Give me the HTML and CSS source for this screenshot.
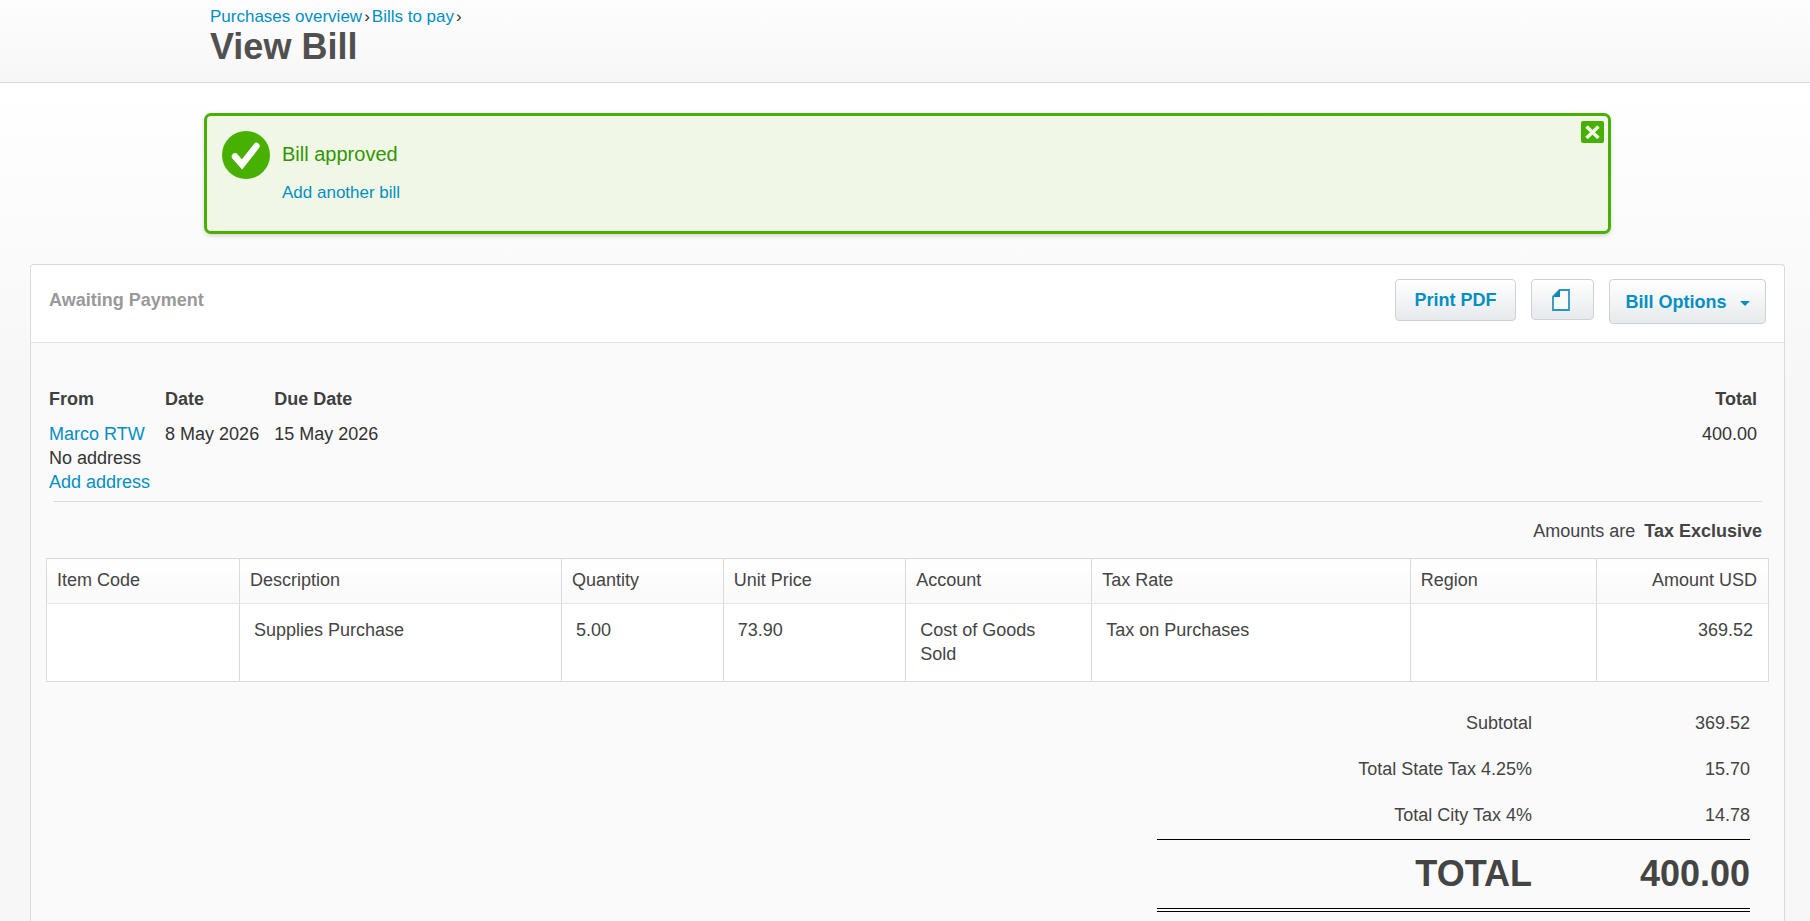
FILE: index.html
```html
<!DOCTYPE html>
<html lang="en">
<head>
<meta charset="utf-8">
<title>View Bill</title>
<link rel="stylesheet" href="styles.css">
</head>
<body>
<header class="page-header">
  <div class="container">
    <nav class="breadcrumbs" aria-label="Breadcrumb"><a href="#">Purchases overview</a><span>›</span><a href="#">Bills to pay</a><span>›</span></nav>
    <h1 class="page-title">View Bill</h1>
  </div>
</header>
<main class="page">
  <section class="alert" role="status">
    <svg class="alert-icon" viewBox="0 0 48 48" aria-hidden="true"><circle cx="24" cy="24" r="24" fill="#48b000"/><path d="M13 25.500l7 8L34.500 15" fill="none" stroke="#fff" stroke-width="6.500" stroke-linecap="round" stroke-linejoin="miter"/></svg>
    <div class="alert-text">
      <p class="alert-title">Bill approved</p>
      <a class="alert-link" href="#">Add another bill</a>
    </div>
    <button class="alert-close" type="button" aria-label="Close">
      <svg viewBox="0 0 23 22" aria-hidden="true"><path d="M5.500 5.500l12 11.500M17.500 5.500l-12 11.500" fill="none" stroke="#f0f7e6" stroke-width="3.500"/></svg>
    </button>
  </section>

  <section class="panel">
    <div class="panel-head">
      <h2 class="status">Awaiting Payment</h2>
      <div class="actions">
        <button class="btn btn-print" type="button">Print PDF</button>
        <button class="btn btn-file" type="button" aria-label="Files">
          <svg viewBox="0 0 18 22" aria-hidden="true"><path d="M7.500 1H17v20H1V7.500z" fill="#f7f9fa" stroke="#2b96c0" stroke-width="1.800"/><path d="M1 8l7-7v7z" fill="#0d85b5"/></svg>
        </button>
        <button class="btn btn-options" type="button">Bill Options <span class="caret"></span></button>
      </div>
    </div>

    <div class="bill">
      <div class="summary">
        <dl class="field">
          <dt>From</dt>
          <dd><a href="#">Marco RTW</a><br>No address<br><a href="#">Add address</a></dd>
        </dl>
        <dl class="field"><dt>Date</dt><dd>8 May 2026</dd></dl>
        <dl class="field"><dt>Due Date</dt><dd>15 May 2026</dd></dl>
        <dl class="field field-total"><dt>Total</dt><dd>400.00</dd></dl>
      </div>
      <p class="tax-mode">Amounts are <strong>Tax Exclusive</strong></p>

      <table class="lines">
        <colgroup><col class="c-item"><col class="c-desc"><col class="c-qty"><col class="c-price"><col class="c-account"><col class="c-tax"><col class="c-region"><col class="c-amount"></colgroup>
        <thead>
          <tr><th>Item Code</th><th>Description</th><th>Quantity</th><th>Unit Price</th><th>Account</th><th>Tax Rate</th><th>Region</th><th class="num">Amount USD</th></tr>
        </thead>
        <tbody>
          <tr><td></td><td>Supplies Purchase</td><td>5.00</td><td>73.90</td><td>Cost of Goods Sold</td><td>Tax on Purchases</td><td></td><td class="num">369.52</td></tr>
        </tbody>
      </table>

      <dl class="totals">
        <div class="total-row"><dt>Subtotal</dt><dd>369.52</dd></div>
        <div class="total-row"><dt>Total State Tax 4.25%</dt><dd>15.70</dd></div>
        <div class="total-row"><dt>Total City Tax 4%</dt><dd>14.78</dd></div>
        <div class="total-row grand"><dt>TOTAL</dt><dd>400.00</dd></div>
      </dl>
    </div>
  </section>
</main>
</body>
</html>
```
FILE: styles.css
```css
* { box-sizing: border-box; }

body {
  margin: 0;
  min-height: 100vh;
  display: flex;
  flex-direction: column;
  background: #f7f7f7;
  color: #333;
  font: 18px/24px "Liberation Sans", Arial, sans-serif;
}

h1, h2, p, dl, dd { margin: 0; }

a { color: #048fc2; text-decoration: none; }

button { font: inherit; cursor: pointer; }

.page-header {
  padding: 7px 25px 15px 30px;
  border-bottom: 1px solid #d9dadb;
  background: linear-gradient(#fdfdfd, #f7f7f7);
}

.container {
  max-width: 1407px;
  margin: 0 auto;
  padding: 0 6px;
}

.breadcrumbs {
  display: flex;
  gap: 2px;
  font-size: 17px;
  line-height: 20px;
}

.page-title {
  color: #505050;
  font-size: 36px;
  line-height: 40px;
}

.page {
  flex: 1;
  display: flex;
  flex-direction: column;
  padding: 30px 25px 0 30px;
  background: linear-gradient(#fff, #f7f7f7 300px);
}

.alert {
  position: relative;
  display: flex;
  gap: 12px;
  width: 100%;
  max-width: 1407px;
  min-height: 121px;
  margin: 0 auto 30px;
  padding: 15px;
  border: 3px solid #48b000;
  border-radius: 7px;
  background: #f0f7e6;
  box-shadow: 0 2px 4px rgba(0, 0, 0, .15);
}

.alert-icon { width: 48px; height: 48px; }

.alert-text { padding-top: 11px; }

.alert-title {
  margin-bottom: 14px;
  color: #329600;
  font-size: 20px;
}

.alert-link { font-size: 17px; }

.alert-close {
  position: absolute;
  top: 5px;
  right: 4px;
  width: 23px;
  height: 22px;
  padding: 0;
  border: 0;
  border-radius: 2px;
  background: #48b000;
}

.alert-close svg { display: block; }

.panel {
  flex: 1;
  display: flex;
  flex-direction: column;
  border: 1px solid #d9dadb;
  border-bottom: 0;
  border-radius: 4px 4px 0 0;
  background: #fafafa;
}

.panel-head {
  display: flex;
  justify-content: space-between;
  align-items: flex-start;
  min-height: 78px;
  padding: 14px 18px;
  border-bottom: 1px solid #e3e4e5;
  border-radius: 4px 4px 0 0;
  background: #fff;
}

.status {
  padding-top: 9px;
  color: #999;
  font-size: 18px;
}

.actions {
  display: flex;
  align-items: flex-start;
  gap: 15px;
}

.btn {
  display: flex;
  align-items: center;
  justify-content: center;
  padding: 0;
  border: 1px solid #cdd2d5;
  border-radius: 4px;
  background: linear-gradient(#fff, #e6eaec);
  color: #048fc2;
  font-weight: bold;
  white-space: nowrap;
}

.btn-print { width: 121px; height: 42px; }
.btn-file { width: 63px; height: 41px; padding-right: 3px; }
.btn-file svg { width: 18px; height: 22px; }
.btn-options { width: 157px; height: 45px; gap: 13px; }

.caret {
  margin-top: 3px;
  border: 5px solid transparent;
  border-top-color: #048fc2;
  border-bottom: 0;
}

.bill { padding: 44px 15px 0; }

.summary {
  display: flex;
  gap: 15px;
  margin: 0 3px;
  padding-bottom: 7px;
}

.field dt {
  margin-bottom: 11px;
  color: #404040;
  font-weight: bold;
}

.field-total {
  margin-left: auto;
  padding-right: 9px;
  text-align: right;
}

.tax-mode {
  margin: 0 7px;
  padding: 17px 0 15px;
  border-top: 1px solid #d9dadb;
  color: #444;
  text-align: right;
}

.tax-mode strong { margin-left: 4px; }

.lines {
  width: 100%;
  table-layout: fixed;
  border-collapse: collapse;
  background: #fff;
  color: #444;
}

.lines th, .lines td {
  border: 1px solid #d9dadb;
  text-align: left;
  vertical-align: top;
}

.lines th {
  padding: 9px 10px 11px;
  border-bottom-color: #e6e7e8;
  background: linear-gradient(#fff, #f9f9f9);
  font-weight: normal;
}

.lines td { height: 78px; padding: 14px 20px 14px 14px; }

.lines .num { padding-left: 0; text-align: right; }
.lines th.num { padding-right: 11px; }
.lines td.num { padding-right: 15px; }

.c-item { width: 192px; }
.c-desc { width: 18.7%; }
.c-qty { width: 9.4%; }
.c-price { width: 10.6%; }
.c-account { width: 10.8%; }
.c-tax { width: 18.5%; }
.c-region { width: 10.8%; }
.c-amount { width: 10%; }

.totals {
  width: 593px;
  margin: 18px 19px 0 auto;
  color: #444;
}

.total-row {
  display: flex;
  justify-content: flex-end;
  padding: 11px 0;
  text-align: right;
}

.total-row dd { width: 218px; }

.grand {
  margin-top: 1px;
  padding: 14px 0;
  border-top: 1px solid #000;
  border-bottom: 4px double #000;
  font-size: 36px;
  line-height: 40px;
  font-weight: bold;
}
```
